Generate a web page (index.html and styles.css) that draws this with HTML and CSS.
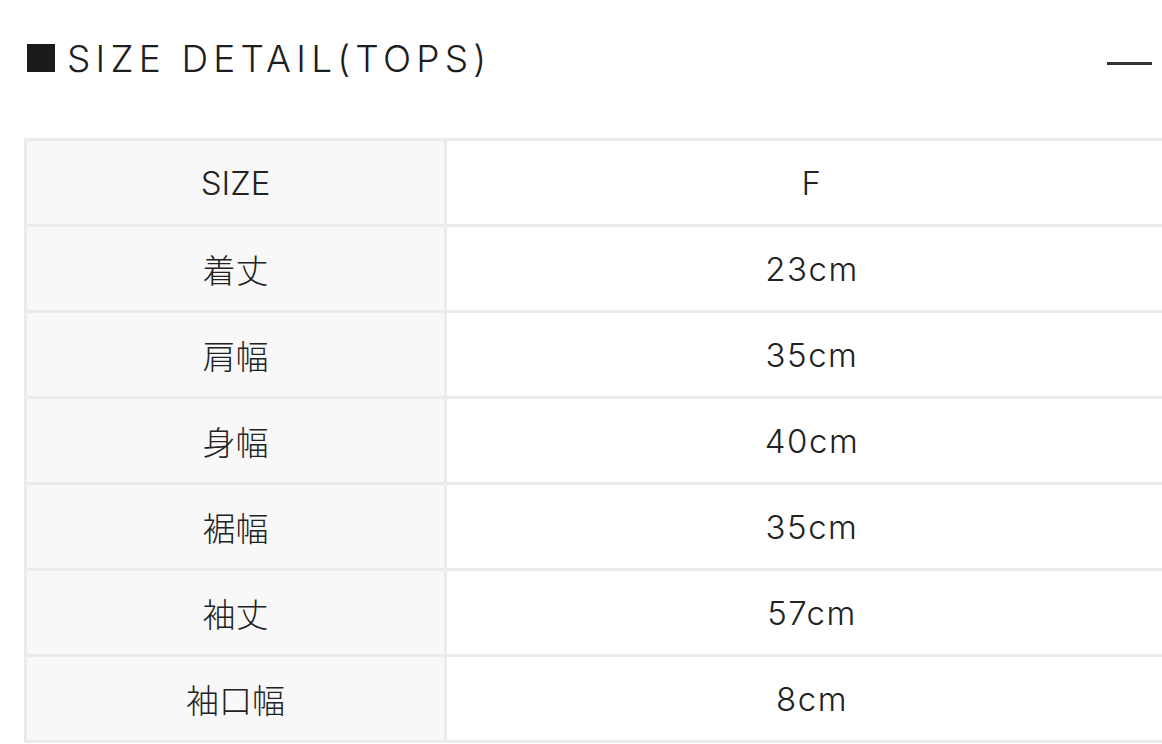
FILE: index.html
```html
<!DOCTYPE html>
<html lang="ja">
<head>
<meta charset="utf-8">
<title>SIZE DETAIL(TOPS)</title>
<link rel="stylesheet" href="styles.css">
</head>
<body>
<section class="size-detail">
  <header class="sd-head">
    <h2 class="sd-title"><span class="sd-mark"></span>SIZE DETAIL(TOPS)</h2>
    <span class="sd-toggle" aria-label="collapse"></span>
  </header>
  <table class="sd-table">
    <tr><td class="sd-key">SIZE</td><td class="sd-val">F</td></tr>
    <tr><td class="sd-key">着丈</td><td class="sd-val">23cm</td></tr>
    <tr><td class="sd-key">肩幅</td><td class="sd-val">35cm</td></tr>
    <tr><td class="sd-key">身幅</td><td class="sd-val">40cm</td></tr>
    <tr><td class="sd-key">裾幅</td><td class="sd-val">35cm</td></tr>
    <tr><td class="sd-key">袖丈</td><td class="sd-val">57cm</td></tr>
    <tr><td class="sd-key">袖口幅</td><td class="sd-val">8cm</td></tr>
  </table>
</section>
</body>
</html>
```
FILE: styles.css
```css
html, body {
  margin: 0;
  padding: 0;
  background: #ffffff;
  overflow: hidden;
}
body {
  width: 1162px;
  height: 744px;
  font-family: Inter, "Noto Sans CJK JP", sans-serif;
  color: #222222;
}
.size-detail {
  width: 1180px;
}
.sd-head {
  height: 116px;
  display: flex;
  align-items: center;
  justify-content: space-between;
  padding: 0 10px 0 27px;
  width: 1162px;
  box-sizing: border-box;
}
.sd-title {
  margin: 0;
  display: flex;
  align-items: center;
  font-weight: 300;
  font-size: 37px;
  letter-spacing: 5.2px;
  color: #1e1e1e;
  line-height: 1;
}
.sd-mark {
  width: 28px;
  height: 28px;
  background: #1b1b1b;
  margin-right: 12px;
  flex: none;
}
.sd-toggle {
  width: 45px;
  height: 3px;
  background: #333333;
  margin-top: 10px;
}
.sd-table {
  margin: 22px 0 0 24px;
  width: 1156px;
  border-collapse: separate;
  border-spacing: 3px;
  background: #ebebeb;
  table-layout: fixed;
}
.sd-table td {
  height: 83px;
  padding: 0;
  text-align: center;
  vertical-align: middle;
  font-size: 33px;
  font-weight: 300;
  color: #222222;
}
.sd-key {
  width: 417px;
  background: #f8f8f8;
}
.sd-val {
  background: #ffffff;
  letter-spacing: 1.5px;
}
```
